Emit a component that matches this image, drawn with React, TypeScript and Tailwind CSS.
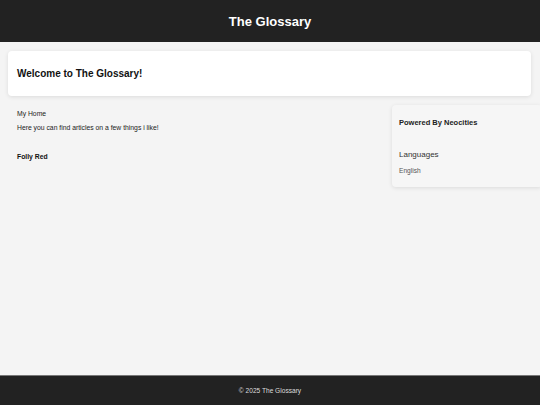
import React from "react";

export default function App() {
  return (
    <div
      className="flex h-[405px] w-[540px] flex-col overflow-hidden bg-[#f4f4f4]"
      style={{ fontFamily: '"Liberation Sans", Arial, sans-serif' }}
    >
      <header className="flex h-[42px] shrink-0 items-center justify-center bg-[#222222]">
        <h1 className="text-[13px] font-bold leading-none text-white">The Glossary</h1>
      </header>

      <div className="mx-[8px] mt-[9px] mr-[9px] flex h-[45px] items-center rounded-[4px] bg-white pl-[9px] shadow-[0_1px_4px_rgba(0,0,0,0.1)]">
        <h2 className="text-[10px] font-bold leading-none text-[#111]">Welcome to The Glossary!</h2>
      </div>

      <main className="flex flex-1">
        <div className="flex-1 pl-[17px] pt-[13px] text-[6.8px] text-[#222]">
          <p className="leading-[10px]">My Home</p>
          <p className="mt-[4px] leading-[10px]">Here you can find articles on a few things i like!</p>
          <p className="mt-[19px] font-bold leading-[10px] text-[#111]">Folly Red</p>
        </div>
        <aside className="mr-[-2px] mt-[9px] h-[82px] w-[150px] shrink-0 rounded-[4px] bg-[#f6f6f6] pl-[7px] pt-[13px] shadow-[0_1px_4px_rgba(0,0,0,0.1)]">
          <h3 className="text-[7.5px] font-bold leading-[10px] text-[#222]">Powered By Neocities</h3>
          <h4 className="mt-[21px] text-[8px] leading-[11px] text-[#333]">Languages</h4>
          <p className="mt-[6px] text-[6.6px] leading-[9px] text-[#555]">English</p>
        </aside>
      </main>

      <footer className="flex h-[30px] shrink-0 items-center justify-center border-t border-[#777] bg-[#222222] pt-[1px]">
        <p className="text-[6.6px] leading-none text-[#dddddd]">© 2025 The Glossary</p>
      </footer>
    </div>
  );
}
